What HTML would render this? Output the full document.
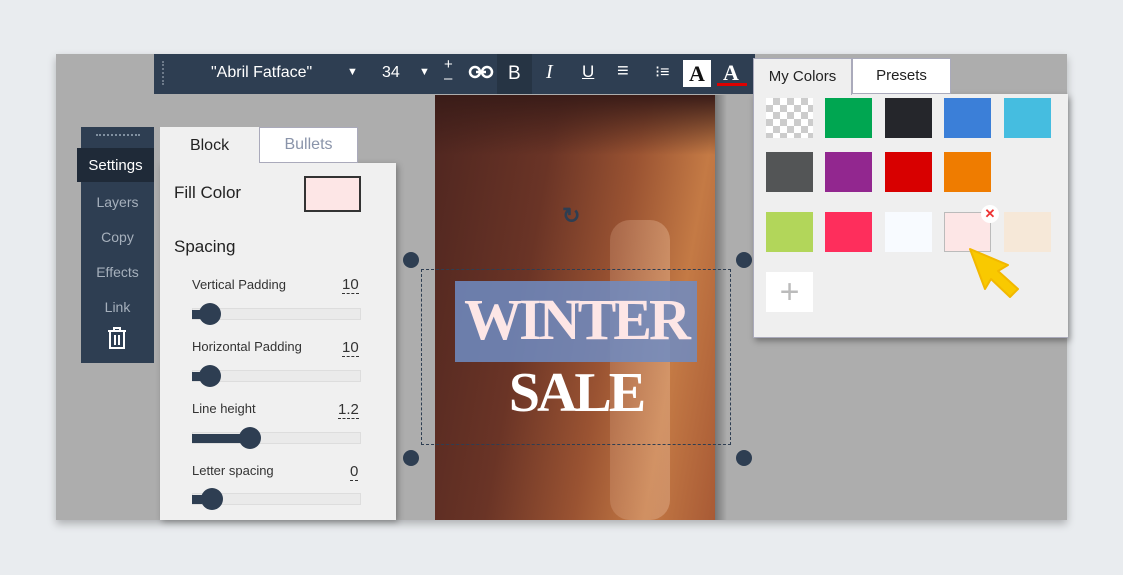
<!DOCTYPE html><html><head><style>
body{margin:0;width:1123px;height:575px;background:#e9ecef;position:relative;overflow:hidden;font-family:"Liberation Sans",sans-serif}
.a{position:absolute}
.sw{position:absolute;width:47px;height:40px}
.lab{position:absolute;left:192px;font-size:13px;color:#333}
.val{position:absolute;font-size:15px;color:#333;border-bottom:1px dashed #333;line-height:16px}
.tr{position:absolute;left:192px;width:169px;height:12px;background:#eaeaea;border:1px solid #ddd;box-sizing:border-box}
.kn{position:absolute;width:22px;height:22px;border-radius:50%;background:#2e3e52}
.h{position:absolute;width:16px;height:16px;border-radius:50%;background:#2e3e52}
.tb{position:absolute;top:62px;color:#fff;font-size:18px}
.sl{position:absolute;left:81px;width:73px;text-align:center;color:#a6b0bc;font-size:14px}
</style></head><body>
<div class="a" style="left:56px;top:54px;width:1011px;height:466px;background:#adadad;box-shadow:0 4px 8px rgba(0,0,0,.25)"></div>
<!-- image -->
<div class="a" style="left:435px;top:95px;width:280px;height:425px;background:linear-gradient(100deg,#4f2620 0%,#6a3426 35%,#9a5332 60%,#c47a45 80%,#a85a35 100%)"></div>
<div class="a" style="left:435px;top:95px;width:280px;height:60px;background:linear-gradient(#3a1c18,rgba(80,40,30,0))"></div>
<div class="a" style="left:610px;top:220px;width:60px;height:300px;background:linear-gradient(90deg,rgba(230,180,150,.25),rgba(240,200,170,.35));border-radius:20px"></div>
<div class="a" style="left:715px;top:95px;width:12px;height:425px;background:linear-gradient(90deg,#777,#adadad)"></div>
<div class="a" style="left:562px;top:203px;font-size:22px;color:#2e3e52;font-weight:bold">↻</div>
<div class="a" style="left:421px;top:269px;width:308px;height:174px;border:1px dashed #2e3e52"></div>
<div class="h" style="left:403px;top:252px"></div><div class="h" style="left:736px;top:252px"></div>
<div class="h" style="left:403px;top:450px"></div><div class="h" style="left:736px;top:450px"></div>
<div class="a" style="left:455px;top:281px;width:242px;height:81px;background:rgba(110,140,195,.85)"></div>
<div class="a" style="left:455px;top:289px;width:242px;text-align:center;font-family:'Liberation Serif',serif;font-weight:bold;font-size:58px;color:#fde6e6;letter-spacing:-3px;line-height:62px">WINTER</div>
<div class="a" style="left:455px;top:362px;width:242px;text-align:center;font-family:'Liberation Serif',serif;font-weight:bold;font-size:56px;color:#fff;letter-spacing:-3px;line-height:62px">SALE</div>
<!-- toolbar -->
<div class="a" style="left:154px;top:54px;width:601px;height:40px;background:#2e3e52"></div>
<div class="a" style="left:162px;top:61px;width:3px;height:24px;border-left:2px dotted #6d7a8a"></div>
<div class="tb" style="left:211px;top:64px;font-size:16px">"Abril Fatface"</div>
<div class="tb" style="left:347px;top:66px;font-size:11px">▼</div>
<div class="tb" style="left:382px;top:64px;font-size:16px">34</div>
<div class="tb" style="left:419px;top:66px;font-size:11px">▼</div>
<div class="tb" style="left:444px;top:58px;font-size:15px;line-height:14px">+<br>–</div>
<svg class="a" style="left:468px;top:64px" width="26" height="16"><rect x="2" y="3" width="10" height="10" rx="5" fill="none" stroke="#fff" stroke-width="2.5"/><rect x="14" y="3" width="10" height="10" rx="5" fill="none" stroke="#fff" stroke-width="2.5"/><line x1="8" y1="8" x2="18" y2="8" stroke="#fff" stroke-width="2.5"/></svg>
<div class="a" style="left:497px;top:54px;width:35px;height:40px;background:#263444"></div>
<div class="tb" style="left:508px;top:63px;font-size:19px">B</div>
<div class="tb" style="left:546px;top:61px;font-size:20px;font-style:italic;font-family:'Liberation Serif',serif">I</div>
<div class="tb" style="left:582px;top:62px;font-size:17px;text-decoration:underline">U</div>
<div class="tb" style="left:617px;top:60px;font-size:20px">≡</div>
<div class="tb" style="left:655px;top:62px;font-size:16px">⁝≡</div>
<div class="a" style="left:683px;top:60px;width:28px;height:27px;background:#fff;color:#111;font:bold 22px 'Liberation Serif',serif;text-align:center;line-height:27px">A</div>
<div class="tb" style="left:723px;top:60px;font:bold 22px 'Liberation Serif',serif">A</div>
<div class="a" style="left:717px;top:83px;width:30px;height:3px;background:#d00"></div>
<!-- sidebar -->
<div class="a" style="left:81px;top:127px;width:73px;height:236px;background:#2e3e52"></div>
<div class="a" style="left:96px;top:134px;width:44px;border-top:2px dotted #8090a0"></div>
<div class="a" style="left:77px;top:148px;width:77px;height:34px;background:#1f2a38;color:#fff;font-size:15px;text-align:center;line-height:36px">Settings</div>
<div class="sl" style="top:194px">Layers</div>
<div class="sl" style="top:229px">Copy</div>
<div class="sl" style="top:264px">Effects</div>
<div class="sl" style="top:299px">Link</div>
<svg class="a" style="left:106px;top:326px" width="22" height="24"><path d="M2 5H20M8 5V2H14V5M4 5V22H18V5M9 9V19M13 9V19" fill="none" stroke="#fff" stroke-width="2"/></svg>
<!-- panel -->
<div class="a" style="left:160px;top:163px;width:236px;height:357px;background:#f0f0f0;box-shadow:2px 2px 6px rgba(0,0,0,.3)"></div>
<div class="a" style="left:160px;top:127px;width:99px;height:37px;background:#f0f0f0;font-size:16px;text-align:center;line-height:37px;color:#222">Block</div>
<div class="a" style="left:259px;top:127px;width:99px;height:36px;background:#fff;border:1px solid #aab;box-sizing:border-box;font-size:16px;text-align:center;line-height:34px;color:#8a94aa">Bullets</div>
<div class="a" style="left:174px;top:183px;font-size:17px;color:#222">Fill Color</div>
<div class="a" style="left:304px;top:176px;width:57px;height:36px;background:#fde6e6;border:2px solid #333;box-sizing:border-box"></div>
<div class="a" style="left:174px;top:237px;font-size:17px;color:#222">Spacing</div>
<div class="lab" style="top:277px">Vertical Padding</div><div class="val" style="left:342px;top:277px">10</div>
<div class="tr" style="top:308px"></div><div class="a" style="left:192px;top:310px;width:10px;height:9px;background:#2e3e52"></div><div class="kn" style="left:199px;top:303px"></div>
<div class="lab" style="top:339px">Horizontal Padding</div><div class="val" style="left:342px;top:340px">10</div>
<div class="tr" style="top:370px"></div><div class="a" style="left:192px;top:372px;width:10px;height:9px;background:#2e3e52"></div><div class="kn" style="left:199px;top:365px"></div>
<div class="lab" style="top:401px">Line height</div><div class="val" style="left:338px;top:402px">1.2</div>
<div class="tr" style="top:432px"></div><div class="a" style="left:192px;top:434px;width:55px;height:9px;background:#2e3e52"></div><div class="kn" style="left:239px;top:427px"></div>
<div class="lab" style="top:463px">Letter spacing</div><div class="val" style="left:350px;top:464px">0</div>
<div class="tr" style="top:493px"></div><div class="a" style="left:192px;top:495px;width:10px;height:9px;background:#2e3e52"></div><div class="kn" style="left:201px;top:488px"></div>
<!-- color panel -->
<div class="a" style="left:753px;top:94px;width:314px;height:243px;background:#efefef;border-left:1px solid #aab;border-bottom:1px solid #aab;box-shadow:2px 3px 6px rgba(0,0,0,.35)"></div>
<div class="a" style="left:753px;top:58px;width:99px;height:37px;background:#efefef;border:1px solid #aab;border-bottom:none;box-sizing:border-box;font-size:15px;text-align:center;line-height:36px;color:#222">My Colors</div>
<div class="a" style="left:852px;top:58px;width:99px;height:36px;background:#fff;border:1px solid #aab;box-sizing:border-box;font-size:15px;text-align:center;line-height:34px;color:#222">Presets</div>
<div class="sw" style="left:766px;top:98px;background:repeating-conic-gradient(#ccc 0 25%,#fff 0 50%) 0 0/14px 14px"></div>
<div class="sw" style="left:825px;top:98px;background:#00a651"></div>
<div class="sw" style="left:885px;top:98px;background:#25262b"></div>
<div class="sw" style="left:944px;top:98px;background:#3b7fd8"></div>
<div class="sw" style="left:1004px;top:98px;background:#45bde0"></div>
<div class="sw" style="left:766px;top:152px;background:#535556"></div>
<div class="sw" style="left:825px;top:152px;background:#92278f"></div>
<div class="sw" style="left:885px;top:152px;background:#d80000"></div>
<div class="sw" style="left:944px;top:152px;background:#ef7c00"></div>
<div class="sw" style="left:766px;top:212px;background:#b2d65a"></div>
<div class="sw" style="left:825px;top:212px;background:#fe2e5c"></div>
<div class="sw" style="left:885px;top:212px;background:#f8fbff"></div>
<div class="sw" style="left:944px;top:212px;background:#fde6e6;border:1px solid #bbb;box-sizing:border-box"></div>
<div class="sw" style="left:1004px;top:212px;background:#f6e8d8"></div>
<div class="a" style="left:981px;top:205px;width:18px;height:18px;border-radius:50%;background:#fff;color:#e33;font-size:13px;font-weight:bold;text-align:center;line-height:18px">✕</div>
<div class="sw" style="left:766px;top:272px;background:#fff;color:#bbb;font-size:34px;text-align:center;line-height:40px">+</div>
<svg class="a" style="left:968px;top:247px" width="55" height="52"><path d="M2 2 L40 18 L30 24 L50 42 L42 50 L23 32 L17 42 Z" fill="#f9c900" stroke="#f2b800" stroke-width="2" stroke-linejoin="round"/></svg>
</body></html>
